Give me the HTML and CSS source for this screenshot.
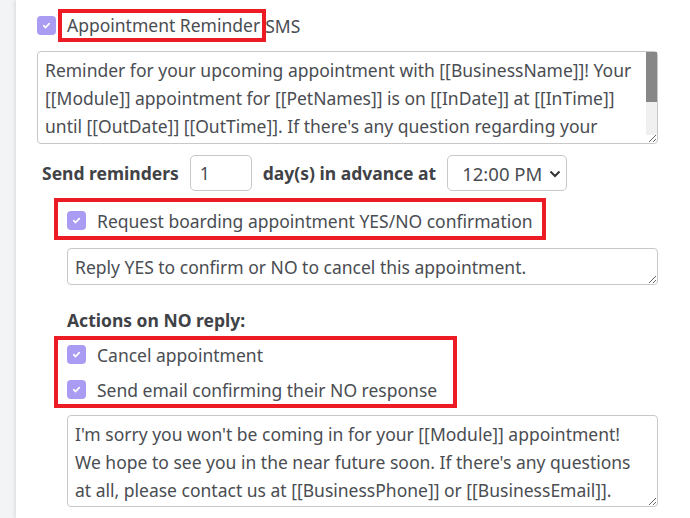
FILE: index.html
```html
<!DOCTYPE html>
<html lang="en">
<head>
  <meta charset="UTF-8" />
  <title>SMS Reminder Settings</title>
  <link rel="stylesheet" href="styles.css">
</head>
<body>
<div class="layout">
  <aside class="sidebar"></aside>

  <main class="panel">
    <!-- Reminder toggle -->
    <div class="sms-head">
      <span class="check"><svg viewBox="0 0 12 12"><path d="M3 6.2l2 2 4-4.3" /></svg></span>
      <span class="mark mark-title">Appointment Reminder</span>
      <span class="sms-word">SMS</span>
    </div>
    <div class="msg-wrap">
      <textarea class="msg msg-long">Reminder for your upcoming appointment with [[BusinessName]]! Your
[[Module]] appointment for [[PetNames]] is on [[InDate]] at [[InTime]]
until [[OutDate]] [[OutTime]]. If there's any question regarding your
appointment, please contact us at [[BusinessPhone]] or
[[BusinessEmail]].</textarea>
      <div class="scrollbar"><div class="thumb"></div></div>
    </div>

    <div class="advance">
      <b>Send reminders</b>
      <input class="days" type="text" value="1" />
      <b>day(s) in advance at</b>
      <div class="time-select">
        <select>
          <option>12:00 PM</option>
          <option>1:00 PM</option>
        </select>
        <svg viewBox="0 0 12 8"><path d="M1.5 1.5l4.5 4.5 4.5-4.5" /></svg>
      </div>
    </div>

    <div class="sub">
      <div class="mark mark-confirm">
        <label class="opt">
          <span class="check"><svg viewBox="0 0 12 12"><path d="M3 6.2l2 2 4-4.3" /></svg></span>
          Request boarding appointment YES/NO confirmation
        </label>
      </div>
      <textarea class="msg msg-short">Reply YES to confirm or NO to cancel this appointment.</textarea>

      <div class="actions-title">Actions on NO reply:</div>
      <div class="mark mark-actions">
        <label class="opt">
          <span class="check"><svg viewBox="0 0 12 12"><path d="M3 6.2l2 2 4-4.3" /></svg></span>
          Cancel appointment
        </label>
        <label class="opt">
          <span class="check"><svg viewBox="0 0 12 12"><path d="M3 6.2l2 2 4-4.3" /></svg></span>
          Send email confirming their NO response
        </label>
      </div>
      <textarea class="msg msg-no">I'm sorry you won't be coming in for your [[Module]] appointment!
We hope to see you in the near future soon. If there's any questions
at all, please contact us at [[BusinessPhone]] or [[BusinessEmail]].</textarea>
    </div>
  </main>
</div>
</body>
</html>
```

FILE: styles.css
```css
body {
  margin: 0;
  font-family: "Noto Sans", sans-serif;
  font-size: 17.5px;
  color: #4a4d52;
  background: #fff;
}
.layout {
  display: flex;
  min-height: 518px;
}
.sidebar {
  width: 16px;
  flex: none;
  background: #f3f4f6;
}
.panel {
  flex: 1;
  padding: 9px 32px 0 21px;
  box-shadow: -2px 0 3px rgba(0,0,0,0.08);
}
.check {
  width: 19px;
  height: 19px;
  flex: none;
  border-radius: 4px;
  background: #a99cf2;
  display: inline-flex;
  align-items: center;
  justify-content: center;
}
.check svg {
  width: 11px;
  height: 11px;
  fill: none;
  stroke: #fff;
  stroke-width: 1.9;
  stroke-linecap: round;
  stroke-linejoin: round;
}
.mark {
  border: 4px solid #ed1c24;
}
.sms-head {
  display: flex;
  align-items: center;
  height: 33px;
}
.mark-title {
  margin-left: 2px;
  padding: 0 2px 0 5px;
  line-height: 25px;
}
.sms-word {
  margin-left: -1px;
}
.msg {
  display: block;
  width: 100%;
  box-sizing: border-box;
  border: 1px solid #c8c8c8;
  border-radius: 4px;
  padding: 4px 7px;
  font-family: inherit;
  font-size: 17.5px;
  line-height: 28px;
  color: #4a4d52;
  resize: vertical;
  white-space: pre-wrap;
  overflow: hidden;
}
.msg-wrap {
  position: relative;
  margin-top: 9px;
}
.msg-long {
  height: 93px;
}
.scrollbar {
  position: absolute;
  right: 1px;
  top: 1px;
  bottom: 9px;
  width: 11px;
  background: #f0f0f0;
}
.thumb {
  height: 50px;
  background: #878787;
}
.msg-short {
  margin-top: 8px;
  height: 37px;
}
.msg-no {
  margin-top: 7px;
  height: 92px;
}
.advance {
  display: flex;
  align-items: center;
  gap: 11px;
  margin: 11px 0 0 5px;
  color: #3f4246;
}
.days {
  width: 62px;
  height: 36px;
  box-sizing: border-box;
  border: 1px solid #c8c8c8;
  border-radius: 5px;
  padding: 0 9px;
  font-family: inherit;
  font-size: 17.5px;
  color: #4a4d52;
}
.time-select {
  position: relative;
}
.time-select select {
  appearance: none;
  width: 120px;
  height: 36px;
  border: 1px solid #c8c8c8;
  border-radius: 5px;
  background: #fff;
  padding: 0 0 0 14px;
  font-family: inherit;
  font-size: 18.5px;
  color: #4a4d52;
}
.time-select svg {
  position: absolute;
  right: 6px;
  top: 15px;
  width: 12px;
  height: 8px;
  fill: none;
  stroke: #333;
  stroke-width: 2;
  pointer-events: none;
}
.sub {
  margin-left: 30px;
}
.opt {
  display: flex;
  align-items: center;
  gap: 11px;
  height: 29px;
}
.mark-confirm {
  width: fit-content;
  margin: 7px 0 0 -13px;
  padding: 4px 9px 1px 9px;
}
.actions-title {
  margin-top: 23px;
  font-weight: bold;
  line-height: 24px;
  color: #3f4246;
}
.mark-actions {
  width: fit-content;
  margin: 4px 0 0 -13px;
  padding: 0 16px 0 9px;
  display: flex;
  flex-direction: column;
  gap: 6px;
}
```
